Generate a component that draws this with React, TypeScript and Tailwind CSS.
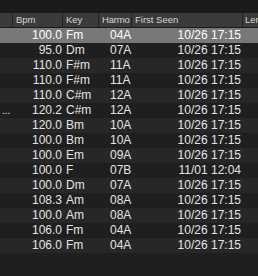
import React from "react";

type Track = { note?: string; bpm: string; key: string; harmo: string; seen: string };

const tracks: Track[] = [
  { bpm: "100.0", key: "Fm", harmo: "04A", seen: "10/26 17:15" },
  { bpm: "95.0", key: "Dm", harmo: "07A", seen: "10/26 17:15" },
  { bpm: "110.0", key: "F#m", harmo: "11A", seen: "10/26 17:15" },
  { bpm: "110.0", key: "F#m", harmo: "11A", seen: "10/26 17:15" },
  { bpm: "110.0", key: "C#m", harmo: "12A", seen: "10/26 17:15" },
  { note: "...", bpm: "120.2", key: "C#m", harmo: "12A", seen: "10/26 17:15" },
  { bpm: "120.0", key: "Bm", harmo: "10A", seen: "10/26 17:15" },
  { bpm: "100.0", key: "Bm", harmo: "10A", seen: "10/26 17:15" },
  { bpm: "100.0", key: "Em", harmo: "09A", seen: "10/26 17:15" },
  { bpm: "100.0", key: "F", harmo: "07B", seen: "11/01 12:04" },
  { bpm: "100.0", key: "Dm", harmo: "07A", seen: "10/26 17:15" },
  { bpm: "108.3", key: "Am", harmo: "08A", seen: "10/26 17:15" },
  { bpm: "100.0", key: "Am", harmo: "08A", seen: "10/26 17:15" },
  { bpm: "106.0", key: "Fm", harmo: "04A", seen: "10/26 17:15" },
  { bpm: "106.0", key: "Fm", harmo: "04A", seen: "10/26 17:15" },
];

// grid widths shared by header and rows
const cols = "grid grid-cols-[13px_50px_36px_33px_111px_1fr]";

export default function App() {
  return (
    <div className="h-[276px] w-[258px] overflow-hidden bg-[#1f1f1f] font-['Liberation_Sans',Arial,sans-serif]">
      <div className="h-[13px] bg-[#1b1b1b]" />

      <div className={`${cols} h-[15px] border-b border-[#1a1a1a] bg-[#3b3b3b] text-[9.5px] leading-[14px] text-[#d6d6d6]`}>
        <div className="border-r border-[#222]" />
        <div className="border-r border-[#222] pl-[3px]">Bpm</div>
        <div className="border-r border-[#222] pl-[3px]">Key</div>
        <div className="overflow-hidden whitespace-nowrap border-r border-[#222] pl-[3px] tracking-[-0.2px]">Harmo</div>
        <div className="border-r border-[#222] pl-[3px]">First Seen</div>
        <div className="overflow-hidden whitespace-nowrap pl-[2px]">Len</div>
      </div>

      {tracks.map((t, i) => (
        <div
          key={i}
          className={`${cols} h-[15px] text-[12px] leading-[15px] ${
            i === 0 ? "bg-[#787878] text-white" : i % 2 ? "bg-[#1f1f1f] text-[#e4e4e4]" : "bg-[#272727] text-[#e4e4e4]"
          }`}
        >
          <div className="overflow-hidden pl-[2px] text-[10px]">{t.note}</div>
          <div className="pr-[1px] text-right">{t.bpm}</div>
          <div className="pl-[3px]">{t.key}</div>
          <div className="whitespace-nowrap pl-[11px]">{t.harmo}</div>
          <div className="pr-[2px] text-right">{t.seen}</div>
          <div />
        </div>
      ))}
    </div>
  );
}
